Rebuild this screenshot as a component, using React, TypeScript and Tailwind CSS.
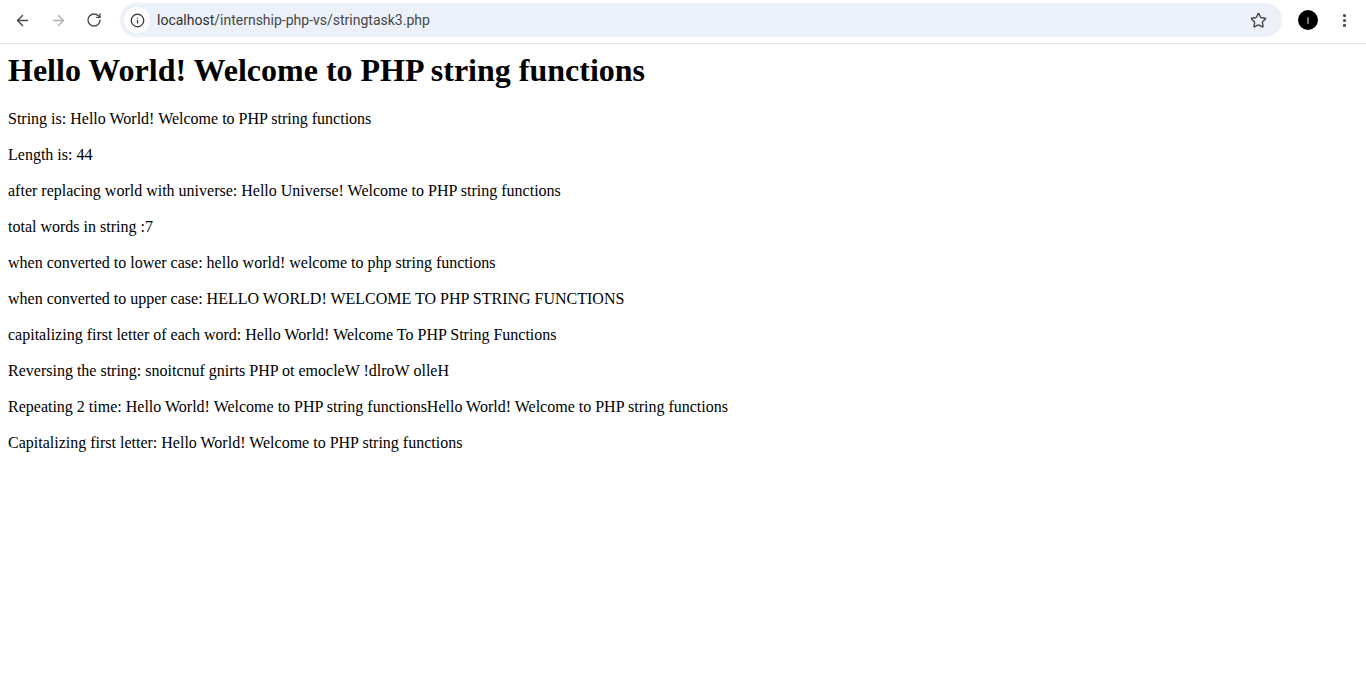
import { ArrowLeft, ArrowRight, RotateCw, Info, Star, EllipsisVertical } from 'lucide-react';

const LINES = [
  'String is: Hello World! Welcome to PHP string functions',
  'Length is: 44',
  'after replacing world with universe: Hello Universe! Welcome to PHP string functions',
  'total words in string :7',
  'when converted to lower case: hello world! welcome to php string functions',
  'when converted to upper case: HELLO WORLD! WELCOME TO PHP STRING FUNCTIONS',
  'capitalizing first letter of each word: Hello World! Welcome To PHP String Functions',
  'Reversing the string: snoitcnuf gnirts PHP ot emocleW !dlroW olleH',
  'Repeating 2 time: Hello World! Welcome to PHP string functionsHello World! Welcome to PHP string functions',
  'Capitalizing first letter: Hello World! Welcome to PHP string functions',
];

export default function App() {
  return (
    <div className="min-h-[685px] bg-white">
      {/* Browser toolbar */}
      <div className="flex h-11 items-center border-b border-[#e3e3e3] pl-[6px] pr-[6px] pb-[3px]">
        <div className="flex w-[32px] justify-center">
          <ArrowLeft className="h-[17px] w-[17px] text-[#474747]" strokeWidth={2} />
        </div>
        <div className="ml-[4px] flex w-[32px] justify-center">
          <ArrowRight className="h-[17px] w-[17px] text-[#b0b0b0]" strokeWidth={2} />
        </div>
        <div className="ml-[4px] flex w-[32px] justify-center">
          <RotateCw className="h-[16px] w-[16px] text-[#474747]" strokeWidth={2} />
        </div>
        <div className="ml-[10px] flex h-[34px] w-[1162px] items-center rounded-full bg-[#ecf1f9] pl-[4px] pr-[15px]">
          <div className="flex h-[26px] w-[26px] items-center justify-center rounded-full bg-white">
            <Info className="h-[15px] w-[15px] text-[#303030]" strokeWidth={2} />
          </div>
          <span className="ml-[7px] flex-1 font-['Roboto',sans-serif] text-[14px] text-[#474747]">
            <span className="text-[#303030]">localhost</span>/internship-php-vs/stringtask3.php
          </span>
          <Star className="h-[17px] w-[17px] text-[#474747]" strokeWidth={2} />
        </div>
        <div className="ml-[16px] flex h-[20px] w-[20px] items-center justify-center rounded-full bg-black">
          <span className="h-[7px] w-[2px] rounded-full bg-[#777777]" />
        </div>
        <div className="ml-[16px] flex w-[20px] justify-center">
          <EllipsisVertical className="h-[17px] w-[17px] text-[#474747]" strokeWidth={2.5} />
        </div>
      </div>

      {/* Page output */}
      <div className="px-2 pt-2 font-['Liberation_Serif',serif] text-[16px] text-black">
        <h1 className="text-[32px] font-bold leading-[37px]">Hello World! Welcome to PHP string functions</h1>
        <div className="mt-[21px] flex flex-col gap-[18px]">
          {LINES.map((line) => (
            <p key={line} className="leading-[18px]">
              {line}
            </p>
          ))}
        </div>
      </div>
    </div>
  );
}
